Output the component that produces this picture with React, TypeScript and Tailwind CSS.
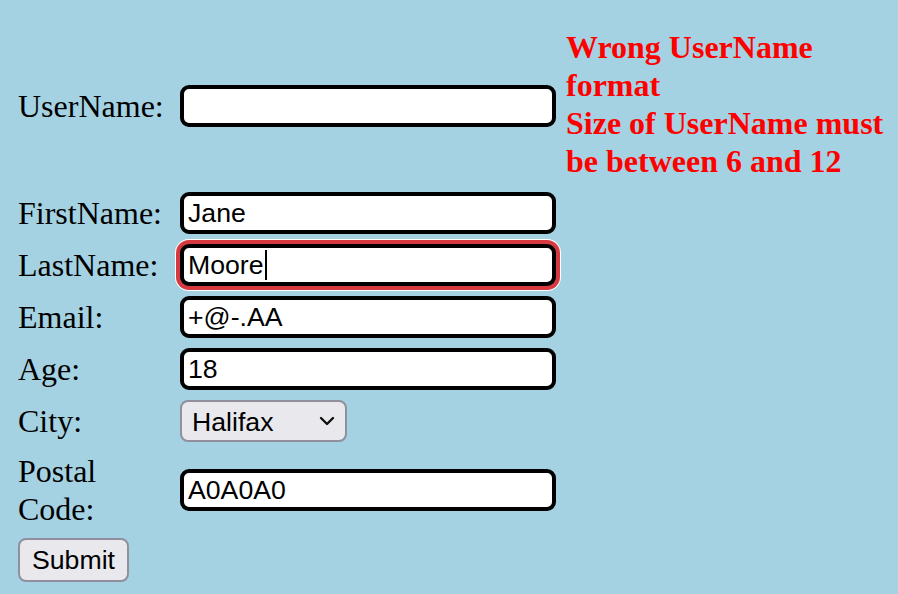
import { useState } from 'react'

const serif = "font-['Liberation_Serif','Times_New_Roman',serif]"
const sans = "font-['Liberation_Sans',Arial,sans-serif]"

const inputClass =
  'h-[42px] w-[376px] rounded-[9px] border-4 border-black bg-white pl-[4px] pr-1 text-[26.67px] text-black outline-none ' +
  sans

interface FormData {
  userName: string
  firstName: string
  lastName: string
  email: string
  age: string
  city: string
  postalCode: string
}

function Label({ children }: { children: React.ReactNode }) {
  return <div className={`text-[32px] leading-[38px] text-black ${serif}`}>{children}</div>
}

export default function App() {
  const [form, setForm] = useState<FormData>({
    userName: '',
    firstName: 'Jane',
    lastName: 'Moore',
    email: '+@-.AA',
    age: '18',
    city: 'Halifax',
    postalCode: 'A0A0A0'
  })

  const handleChange = (e: React.ChangeEvent<HTMLInputElement | HTMLSelectElement>) => {
    const { name, value } = e.target
    setForm(prev => ({ ...prev, [name]: value }))
  }

  return (
    <div className="min-h-screen w-full bg-[#a4d2e2] pl-[18px] pt-[30px]">
      <form
        onSubmit={e => e.preventDefault()}
        className="grid grid-cols-[152px_376px_1fr] items-center gap-x-[10px] gap-y-[10px]"
      >
        {/* UserName + errors */}
        <Label>UserName:</Label>
        <input name="userName" value={form.userName} onChange={handleChange} className={inputClass} />
        <div className={`-translate-y-[2px] text-[32px] font-bold leading-[38px] text-[#ff0000] ${serif}`}>
          <div>Wrong UserName format</div>
          <div>Size of UserName must be between 6 and 12</div>
        </div>

        <Label>FirstName:</Label>
        <input name="firstName" value={form.firstName} onChange={handleChange} className={inputClass} />
        <div />

        <Label>LastName:</Label>
        <div className="relative h-[42px] w-[376px]">
          <input
            name="lastName"
            value={form.lastName}
            onChange={handleChange}
            className={`${inputClass} shadow-[0_0_0_4px_#d63a40,0_0_0_5px_#ffffff]`}
          />
          <span className="pointer-events-none absolute left-[85px] top-[6px] h-[30px] w-[2px] bg-black" />
        </div>
        <div />

        <Label>Email:</Label>
        <input name="email" value={form.email} onChange={handleChange} className={inputClass} />
        <div />

        <Label>Age:</Label>
        <input name="age" value={form.age} onChange={handleChange} className={inputClass} />
        <div />

        <Label>City:</Label>
        <div className="relative h-[42px] w-[167px]">
          <select
            name="city"
            value={form.city}
            onChange={handleChange}
            className={`h-[42px] w-[167px] appearance-none rounded-[8px] border-2 border-[#8f8f9d] bg-[#e9e9ed] pl-[10px] text-[26.67px] text-black outline-none ${sans}`}
          >
            <option>Halifax</option>
            <option>Toronto</option>
            <option>Montreal</option>
            <option>Vancouver</option>
          </select>
          <svg
            className="pointer-events-none absolute left-[139px] top-[16px]"
            width="16"
            height="10"
            viewBox="0 0 16 10"
            fill="none"
          >
            <path d="M2 2l6 6 6-6" stroke="#111" strokeWidth="2.4" strokeLinecap="round" strokeLinejoin="round" />
          </svg>
        </div>
        <div />

        <Label>
          Postal
          <br />
          Code:
        </Label>
        <input name="postalCode" value={form.postalCode} onChange={handleChange} className={inputClass} />
        <div />

        <div>
          <button
            type="submit"
            className={`h-[44px] w-[111px] rounded-[8px] border-2 border-[#8f8f9d] bg-[#e9e9ed] text-[26.67px] text-black ${sans}`}
          >
            Submit
          </button>
        </div>
      </form>
    </div>
  )
}
